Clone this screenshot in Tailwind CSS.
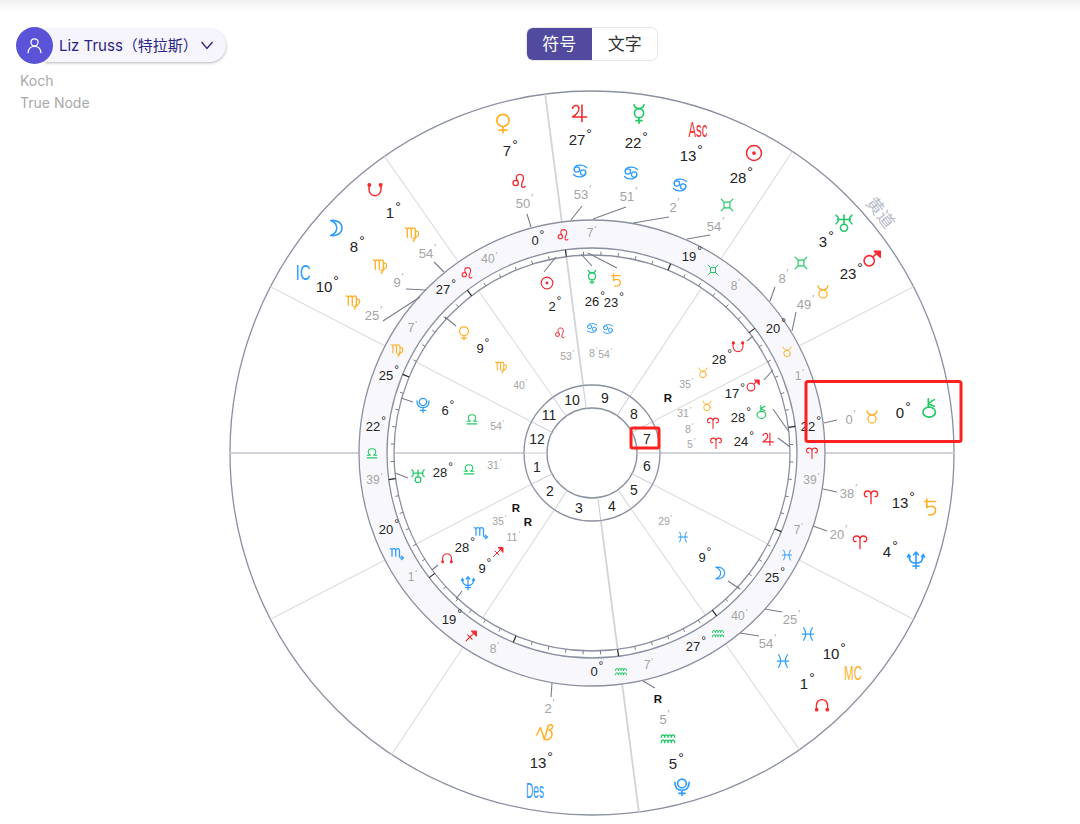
<!DOCTYPE html>
<html lang="zh">
<head>
    <meta charset="UTF-8">
    <title>Liz Truss</title>
    <script src="https://cdn.jsdelivr.net/npm/@tailwindcss/browser@4"></script>
</head>
<body class="bg-white font-['Inter','Noto_Sans_CJK_SC',sans-serif]">
<div class="relative h-[824px] w-[1080px] overflow-hidden">
    <!-- chart canvas -->
    <svg id="chart" class="absolute inset-0" width="1080" height="824" viewBox="0 0 1080 824" xmlns="http://www.w3.org/2000/svg">
        <defs>
            <symbol id="aries" viewBox="0 0 24 24"><path d="M12 22V9c0-4-2-6-5-6S2 5 2 8s2 4 4 3M12 9c0-4 2-6 5-6s5 2 5 5-2 4-4 3"/></symbol>
            <symbol id="taurus" viewBox="0 0 24 24"><circle cx="12" cy="15" r="6.5"/><path d="M4 2c1 4 4 6.500 8 6.500S19 6 20 2"/></symbol>
            <symbol id="gemini" viewBox="0 0 24 24"><path d="M2 2L7 7H17L22 2M7 7V17M17 7V17M2 22L7 17H17L22 22"/></symbol>
            <symbol id="cancer" viewBox="0 0 24 24"><circle cx="7" cy="9.500" r="4.300"/><circle cx="17" cy="14.500" r="4.300"/><path d="M2.700 9.500C3 2 16 0 22.500 6.500M21.300 14.500C21 22 8 24 1.500 17.500"/></symbol>
            <symbol id="leo" viewBox="0 0 24 24"><circle cx="7" cy="15" r="4"/><path d="M10 12C6 7 8 2 13 2s7 4 5 9c-1 3-3 6-2 9 1 2 4 2 5 0"/></symbol>
            <symbol id="virgo" viewBox="0 0 24 24"><path d="M2 3c2 0 3 1 3 3v11M5 6c0-2 1.500-3 3-3s3 1 3 3v11M11 6c0-2 1.500-3 3-3s3 1 3 3v9c0 3-1 6-3 8M17 9c2-2 5-1 5 2s-3 7-9 8"/></symbol>
            <symbol id="libra" viewBox="0 0 24 24"><path d="M3 21h18M3 16h6c-3-2-4-4-4-6 0-4 3-6 7-6s7 2 7 6c0 2-1 4-4 6h6"/></symbol>
            <symbol id="scorpio" viewBox="0 0 24 24"><path d="M1 5c2 0 3 1 3 3v9M4 8c0-2 1.500-3 3-3s3 1 3 3v9M10 8c0-2 1.500-3 3-3s3 1 3 3v9c0 3 3 4 6 3"/><path d="M19 17l3 3-3 3"/></symbol>
            <symbol id="sagittarius" viewBox="0 0 24 24"><path d="M3 21L19 5M6 10l8 8"/><path d="M13 3h9v9z" fill="currentColor"/></symbol>
            <symbol id="capricorn" viewBox="0 0 24 24"><path d="M1 16L6 6l5 16 5-17"/><path d="M16 5c0-3 5-4 6-1s-2 5-5 5c3 1 5 4 4 8s-5 6-9 5"/></symbol>
            <symbol id="aquarius" viewBox="0 0 24 24"><path d="M2 11c0-5 5-5 5 0 0-5 5-5 5 0 0-5 5-5 5 0 0-5 5-5 5 0M2 19c0-5 5-5 5 0 0-5 5-5 5 0 0-5 5-5 5 0 0-5 5-5 5 0"/></symbol>
            <symbol id="pisces" viewBox="0 0 24 24"><path d="M5 2c4 6 4 14 0 20M19 2c-4 6-4 14 0 20M3 12h18"/></symbol>
            <symbol id="sun" viewBox="0 0 24 24"><circle cx="12" cy="12" r="10"/><circle cx="12" cy="12" r="1.500" fill="currentColor"/></symbol>
            <symbol id="moon" viewBox="0 0 24 24"><path d="M5 2c8-1 15 3 15 10s-7 11-15 10c5-2 8-6 8-10S10 4 5 2z"/></symbol>
            <symbol id="mercury" viewBox="0 0 24 24"><circle cx="12" cy="11" r="5.500"/><path d="M6 1c1 3 3 4.500 6 4.500S17 4 18 1M12 16.500V23M8.500 20h7"/></symbol>
            <symbol id="venus" viewBox="0 0 24 24"><circle cx="12" cy="9" r="7"/><path d="M12 16v7M7.500 20h9"/></symbol>
            <symbol id="mars" viewBox="0 0 24 24"><circle cx="8.500" cy="15.500" r="6.500"/><path d="M13.500 10.500L20 4"/><path d="M15 3.500h7.500V11z" fill="currentColor"/></symbol>
            <symbol id="jupiter" viewBox="0 0 24 24"><path d="M5 6c1-4 7-5 8-1 1 4-3 9-8 12h18M17 2v21"/></symbol>
            <symbol id="saturn" viewBox="0 0 24 24"><path d="M5 5h14M8 2v11c3-3 11-3 11 3 0 4-4 6-9 6"/></symbol>
            <symbol id="uranus" viewBox="0 0 24 24"><circle cx="12" cy="18" r="4.500"/><path d="M2 2c4 3 4 8 0 11M22 2c-4 3-4 8 0 11M4 7.500h16M12 2v11.500"/></symbol>
            <symbol id="neptune" viewBox="0 0 24 24"><path d="M3 6c0 7 4 10 9 10s9-3 9-10M12 3v20M8 19.500h8M9 5.500L12 2l3 3.500M1 8l2-3 2 3M19 8l2-3 2 3"/></symbol>
            <symbol id="pluto" viewBox="0 0 24 24"><circle cx="12" cy="7.500" r="5.500"/><path d="M3 6c0 7 4 10 9 10s9-3 9-10M12 16v7M8 20h8"/></symbol>
            <symbol id="chiron" viewBox="0 0 24 24"><ellipse cx="11" cy="17" rx="7.500" ry="6"/><path d="M10 11V1M10 6.500L17 2M10 6.500L17 10"/></symbol>
            <symbol id="northnode" viewBox="0 0 24 24"><path d="M4 19C2 9 6 4 12 4s10 5 8 15"/><circle cx="4" cy="19" r="1.800" fill="currentColor"/><circle cx="20" cy="19" r="1.800" fill="currentColor"/></symbol>
            <symbol id="southnode" viewBox="0 0 24 24"><path d="M4 5C2 15 6 20 12 20s10-5 8-15"/><circle cx="4" cy="5" r="1.800" fill="currentColor"/><circle cx="20" cy="5" r="1.800" fill="currentColor"/></symbol>
        </defs>
        <g id="wheel" class="opacity-[0.99]"></g>
    </svg>

    <!-- top shadow strip -->
    <div class="h-3 bg-gradient-to-b from-[#f1f1f1] to-white"></div>

    <!-- header -->
    <div class="relative flex items-start pl-4 pt-[15px]">
        <div class="w-[510px]">
            <div class="flex h-[37px] w-[210px] items-center">
                <div class="z-10 flex h-[37px] w-[37px] shrink-0 items-center justify-center rounded-full bg-[#5a53d8]">
                    <svg class="h-[19px] w-[19px] text-white" viewBox="0 0 24 24" fill="none" stroke="currentColor" stroke-width="1.600" stroke-linecap="round">
                        <circle cx="12" cy="8" r="4.500"/><path d="M4 21c0-5 3.500-8 8-8s8 3 8 8"/>
                    </svg>
                </div>
                <div class="-ml-[8px] flex h-[33px] flex-1 items-center justify-between rounded-r-full bg-[#f6f5fe] pl-[14px] pr-[13px] shadow-[0_1px_3px_rgba(0,0,0,0.3)]">
                    <span class="whitespace-nowrap pt-[2px] text-[15px] text-[#2b2680]">Liz Truss（特拉斯）</span>
                    <svg class="h-[9px] w-[12px] text-[#2b2680]" viewBox="0 0 12 9" fill="none" stroke="currentColor" stroke-width="1.400"><path d="M0.500 1l5.500 6.500 5.500-6.500"/></svg>
                </div>
            </div>
            <div class="mt-[6px] pl-1 text-[14px] leading-[22px] text-[#a9a9a9]">
                <div>Koch</div>
                <div>True Node</div>
            </div>
        </div>
        <div class="flex h-[34px] w-[132px] overflow-hidden rounded-[7px] border border-[#e6e6e6] bg-white pb-0 text-[17px]">
            <div class="flex flex-1 items-center justify-center bg-[#524a9e] pt-[1px] text-white">符号</div>
            <div class="flex flex-1 items-center justify-center pl-[1px] pt-[1px] text-[#333]">文字</div>
        </div>
    </div>
</div>

<script>
    // chart centre and radii measured from the wheel
    const cx = 592, cy = 453;
    const colors = {
        red: 'text-[#f5272d]', orange: 'text-[#ffb128]', green: 'text-[#1fc863]', blue: 'text-[#2a9bff]'
    };
    const colorOf = {
        aries: 'red', leo: 'red', sagittarius: 'red', sun: 'red', mars: 'red', jupiter: 'red', northnode: 'red', southnode: 'red',
        taurus: 'orange', virgo: 'orange', capricorn: 'orange', venus: 'orange', saturn: 'orange',
        gemini: 'green', libra: 'green', aquarius: 'green', mercury: 'green', uranus: 'green', chiron: 'green',
        cancer: 'blue', scorpio: 'blue', pisces: 'blue', moon: 'blue', neptune: 'blue', pluto: 'blue'
    };
    let out = '';

    function ring(r, cls) { out += `<circle cx="${cx}" cy="${cy}" r="${r}" class="${cls}"/>`; }
    function radial(dx, dy, r1, r2, cls) {
        const l = Math.hypot(dx, dy), ux = dx / l, uy = dy / l;
        out += `<line x1="${cx + ux * r1}" y1="${cy + uy * r1}" x2="${cx + ux * r2}" y2="${cy + uy * r2}" class="${cls}"/>`;
    }

    ring(362, 'fill-white stroke-[#8a8f9f] stroke-[1.3]');

    // house cusps, both directions
    const axes = [[1, 0], [47, 360]], cusps = [[321, 166], [207, 296], [200, -301], [321, -166]];
    cusps.forEach(([x, y]) => [1, -1].forEach(s => {
        radial(x * s, y * s, 68, 362, 'stroke-[#dcdcdf] stroke-[1.1]');
    }));
    axes.forEach(([x, y]) => [1, -1].forEach(s => {
        radial(x * s, y * s, 68, 362, 'stroke-[#d2d2da] stroke-[1.8]');
    }));

    ring(233, 'fill-[#f8f8fc] stroke-[#8a8f9f] stroke-[1.3]');
    ring(205, 'fill-white stroke-[#8a8f9f] stroke-[1.3]');
    ring(198, 'fill-white stroke-[#8a8f9f] stroke-[1.3]');

    // redraw the cusps over the white middle of the wheel
    cusps.forEach(([x, y]) => [1, -1].forEach(s => {
        radial(x * s, y * s, 68, 197, 'stroke-[#dcdcdf] stroke-[1.1]');
    }));
    axes.forEach(([x, y]) => [1, -1].forEach(s => {
        radial(x * s, y * s, 68, 197, 'stroke-[#d2d2da] stroke-[1.8]');
    }));

    // 5 degree ticks, sign boundaries are black and full width
    for (let a = 0; a < 360; a += 5) {
        const t = (a - 7.44) * Math.PI / 180, dx = Math.sin(t), dy = -Math.cos(t);
        if (a % 30 === 0) radial(dx, dy, 198, 205, 'stroke-[#222] stroke-[1.2]');
        else radial(dx, dy, 198, 201.500, 'stroke-[#777b88] stroke-1');
    }

    ring(68, 'fill-white stroke-[#8a8f9f] stroke-[1.3]');
    ring(45, 'fill-white stroke-[#8a8f9f] stroke-[1.3]');
    [[1, 0], [47, 360]].concat(cusps).forEach(([x, y]) => [1, -1].forEach(s => {
        radial(x * s, y * s, 45, 68, 'stroke-[#c8cad2] stroke-1');
    }));

    // connector lines
    [
        [527,214,531,227],[434,262,444,272],[406,289,426,290],[383,321,420,297],[445,317,456,326],
        [582,206,571,220],[626,207,593,219],[669,217,633,223],[710,235,687,239],[775,287,770,301],
        [796,312,792,331],[837,420,824,423],[823,489,837,492],[813,526,827,531],[765,609,782,612],
        [740,633,759,636],[552,683,551,697],[643,681,655,688],
        [747,341,753,336],[764,380,773,370],[773,409,789,432],[778,438,790,447],
        [544,272,556,257],[592,266,581,254],[617,268,588,253],[401,398,413,402],[395,473,408,478],
        [432,570,438,565],[456,599,462,591],[728,581,740,589]
    ].forEach(([a, b, c, d]) => {
        out += `<line x1="${a}" y1="${b}" x2="${c}" y2="${d}" class="stroke-[#777b88] stroke-[1.1]"/>`;
    });

    // [symbol, x, y, size]
    [
        ['venus',503,123,21],['leo',519,181,16],['southnode',375,190,17],['virgo',412,234,16],['moon',336,228,18],
        ['virgo',380,266,16],['virgo',353,302,16],['leo',467,273,13],['virgo',397,350,14],['venus',464,333,15],
        ['jupiter',578,113,19],['mercury',639,114,20],['sun',754,153,18],['cancer',580,171,15],['cancer',631,173,15],
        ['cancer',680,185,15],['gemini',727,205,14],['leo',563,235,13],['gemini',713,270,12],['gemini',801,263,14],
        ['uranus',844,223,19],['mars',872,258,19],['taurus',823,292,15],['taurus',787,352,12],['taurus',872,417,15],
        ['chiron',930,408,20],['southnode',738,347,14],['mars',753,385,14],['taurus',703,373,12],['taurus',707,406,12],
        ['chiron',762,412,14],['aries',713,423,13],['aries',716,443,13],['jupiter',767,439,14],
        ['sun',547,283,14],['mercury',592,277,15],['saturn',616,280,15],['leo',560,333,12],['cancer',592,328,11.500],['cancer',608,329,11.500],
        ['pisces',683,537,12],['aries',812,453,13],['virgo',501,367,13],
        ['pluto',423,405,16],['libra',472,419,13],['libra',372,453,13],['uranus',418,476,15],['libra',469,469,13],
        ['scorpio',481,532,15],['northnode',447,558,13],['sagittarius',498,552,12],['neptune',468,583,15],
        ['scorpio',397,553,15],['sagittarius',471,636,13],
        ['aquarius',621,671,13],['capricorn',545,732,18],['aquarius',668,738,16],['pluto',682,787,19],
        ['aries',871,497,16],['saturn',930,507,19],['aries',860,542,16],['neptune',916,560,19],['pisces',787,555,12],
        ['moon',720,573,14],['aquarius',718,633,13],['pisces',808,634,15],['pisces',783,661,15],['northnode',822,705,16]
    ].forEach(([name, x, y, s]) => {
        out += `<use href="#${name}" x="${x - s / 2}" y="${y - s / 2}" width="${s}" height="${s}" class="${colors[colorOf[name]]}" fill="none" stroke="currentColor" stroke-width="2" stroke-linecap="round" stroke-linejoin="round"/>`;
    });

    function label(x, y, t, size, cls, mark, markSize, rise) {
        const half = String(t).length * 0.556 * size / 2;
        out += `<text x="${x}" y="${y}" text-anchor="middle" dominant-baseline="central" font-size="${size}" class="${cls}">${t}</text>`;
        out += `<text x="${x + half + 1}" y="${y - rise}" dominant-baseline="central" font-size="${markSize}" class="${cls}">${mark}</text>`;
    }
    const deg = (x, y, t, size = 15) => label(x, y, t, size, 'fill-[#222]', '°', size - 1, size * 0.36);
    const min = (x, y, t, size = 12) => label(x, y, t, size, 'fill-[#a3a3a3]', '′', size - 3, size * 0.36);

    // large degrees on the outer ring
    [[507,150,7],[390,212,1],[354,246,8],[324,286,10],[577,139,27],[633,142,22],[688,155,13],[738,177,28],
     [823,241,3],[848,273,23],[900,412,0],[900,502,13],[887,551,4],[831,653,10],[804,683,1],[538,762,13],[673,763,5]
    ].forEach(([x, y, t]) => deg(x, y, t));
    // degrees in the band and inside
    [[535,240,0],[443,289,27],[386,375,25],[373,426,22],[386,529,20],[449,619,19],[594,671,0],[693,646,27],[772,577,25],
     [808,426,22],[773,328,20],[689,256,19],[480,348,9],[552,306,2],[592,301,26],[611,302,23],[719,359,28],[732,393,17],
     [738,417,28],[741,441,24],[445,410,6],[440,472,28],[462,547,28],[482,568,9],[702,557,9]
    ].forEach(([x, y, t]) => deg(x, y, t, 13));
    // minutes
    [[523,203,50],[426,253,54],[397,282,9],[372,315,25],[581,194,53],[627,196,51],[673,207,2],[714,226,54],[782,278,8],
     [804,304,49],[849,419,0],[847,493,38],[837,534,20],[790,619,25],[766,643,54],[548,708,2],[663,719,5]
    ].forEach(([x, y, t]) => min(x, y, t, 13));
    [[488,259,40],[411,328,7],[590,233,7],[734,286,8],[798,376,1],[810,480,39],[797,530,7],[738,616,40],[647,665,7],
     [373,480,39],[411,577,1],[493,649,8]
    ].forEach(([x, y, t]) => min(x, y, t, 12));
    [[566,356,53],[592,353,8],[604,354,54],[519,385,40],[685,384,35],[683,413,31],[688,429,8],[690,444,5],[664,521,29],
     [496,426,54],[493,465,31],[498,521,35],[512,537,11]
    ].forEach(([x, y, t]) => min(x, y, t, 10.500));

    // retrograde flags
    [[668,398],[516,508],[528,522],[658,699]].forEach(([x, y]) => {
        out += `<text x="${x}" y="${y}" text-anchor="middle" dominant-baseline="central" font-size="11.500" font-weight="700" class="fill-[#111]">R</text>`;
    });

    // house numbers
    [[10,572,400],[9,605,398],[8,634,414],[7,647,439],[6,647,466],[5,634,490],[4,612,506],[3,579,508],[2,550,491],[1,537,467],[12,537,439],[11,549,415]]
    .forEach(([t, x, y]) => {
        out += `<text x="${x}" y="${y}" text-anchor="middle" dominant-baseline="central" font-size="14" class="fill-[#222]">${t}</text>`;
    });

    // angle labels, narrow lettering
    [['Asc',698,129,19,22,colors.red],['IC',303,272,15,22,colors.blue],['MC',853,672,18,21,colors.orange],['Des',535,790,18,22,colors.blue]]
    .forEach(([t, x, y, w, size, c]) => {
        out += `<text x="${x}" y="${y}" text-anchor="middle" dominant-baseline="central" font-size="${size}" textLength="${w}" lengthAdjust="spacingAndGlyphs" class="${c} fill-current">${t}</text>`;
    });

    // ecliptic label on the rim
    out += `<text transform="translate(880 213) rotate(52)" text-anchor="middle" dominant-baseline="central" font-size="17" class="fill-[#b8bcc8]">黄道</text>`;

    // highlight boxes
    out += `<rect x="806" y="381.500" width="155" height="60" rx="2" class="fill-none stroke-[#fb1f1f] stroke-[3]"/>`;
    out += `<rect x="631" y="428" width="28" height="20" rx="1.500" class="fill-none stroke-[#fb1f1f] stroke-[3]"/>`;

    const wheel = document.getElementById('wheel');
    wheel.setAttribute('font-family', "'Liberation Sans','Noto Sans CJK SC',sans-serif");
    wheel.innerHTML = out;
</script>
</body>
</html>
